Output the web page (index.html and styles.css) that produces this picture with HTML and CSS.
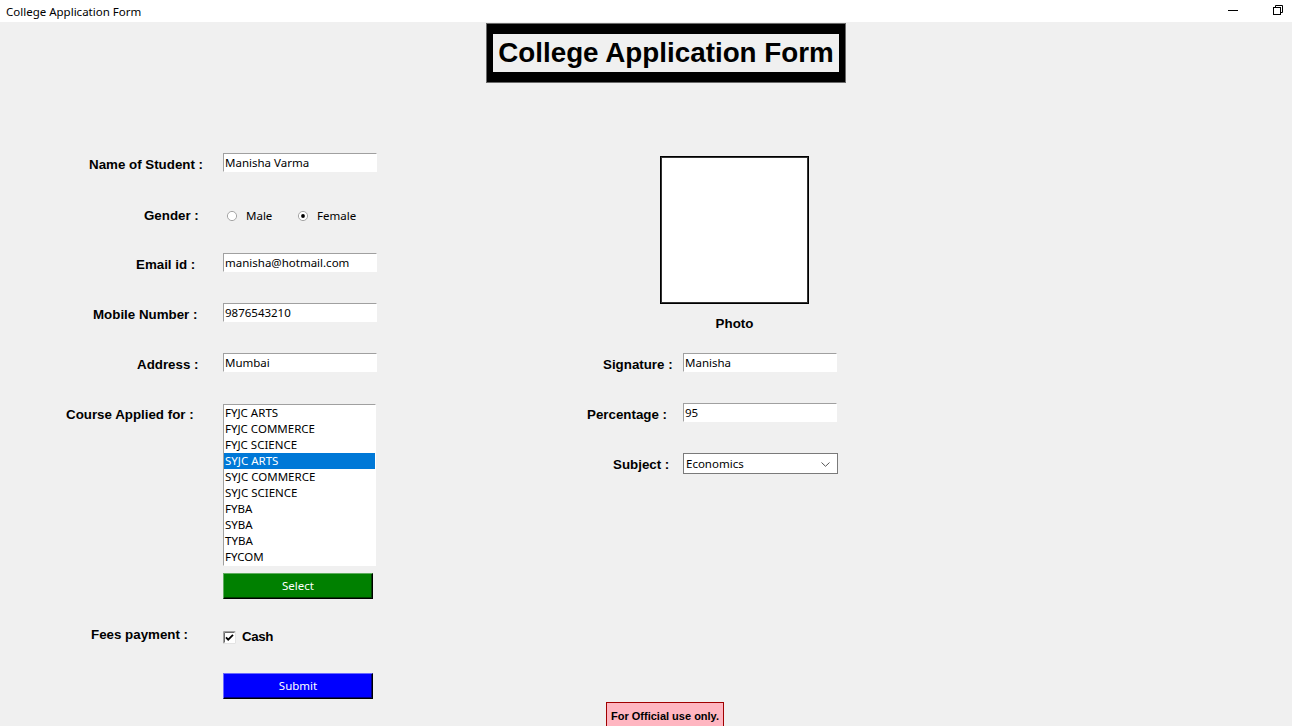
FILE: index.html
```html
<!DOCTYPE html>
<html lang="en">
<head>
<meta charset="utf-8">
<title>College Application Form</title>
<link rel="stylesheet" href="styles.css">
</head>
<body>
<div class="titlebar">
  <span class="title">College Application Form</span>
  <div class="winctl">
    <svg class="wbtn" width="10" height="10" viewBox="0 0 10 10"><line x1="0" y1="5.5" x2="10" y2="5.5" stroke="#000" stroke-width="1"/></svg>
    <svg class="wbtn" width="10" height="10" viewBox="0 0 10 10"><rect x="0.5" y="2.5" width="7" height="7" fill="none" stroke="#000"/><path d="M2.5 2.5V0.5H9.5V7.5H7.5" fill="none" stroke="#000"/></svg>
  </div>
</div>

<div class="heading"><div class="heading-inner">College Application Form</div></div>

<div class="form">
  <div class="col-left">
    <div class="row">
      <div class="lbl l-name">Name of Student :</div>
      <div class="entry">Manisha Varma</div>
    </div>
    <div class="row">
      <div class="lbl l-gender">Gender :</div>
      <div class="radios">
        <div class="radio-opt">
          <svg width="12" height="12" viewBox="0 0 12 12"><circle cx="6" cy="6" r="4.6" fill="#fff" stroke="#a6a6a6" stroke-width="1"/></svg>
          <span>Male</span>
        </div>
        <div class="radio-opt">
          <svg width="12" height="12" viewBox="0 0 12 12"><circle cx="6" cy="6" r="4.6" fill="#fff" stroke="#a6a6a6" stroke-width="1"/><circle cx="6" cy="6" r="1.9" fill="#000"/></svg>
          <span>Female</span>
        </div>
      </div>
    </div>
    <div class="row">
      <div class="lbl l-email">Email id :</div>
      <div class="entry">manisha@hotmail.com</div>
    </div>
    <div class="row">
      <div class="lbl l-mobile">Mobile Number :</div>
      <div class="entry">9876543210</div>
    </div>
    <div class="row">
      <div class="lbl l-address">Address :</div>
      <div class="entry">Mumbai</div>
    </div>
    <div class="row row-course">
      <div class="lbl l-course">Course Applied for :</div>
      <div class="course">
        <div class="listbox">
          <div class="item">FYJC ARTS</div>
          <div class="item">FYJC COMMERCE</div>
          <div class="item">FYJC SCIENCE</div>
          <div class="item selected">SYJC ARTS</div>
          <div class="item">SYJC COMMERCE</div>
          <div class="item">SYJC SCIENCE</div>
          <div class="item">FYBA</div>
          <div class="item">SYBA</div>
          <div class="item">TYBA</div>
          <div class="item">FYCOM</div>
        </div>
        <div class="btn btn-select">Select</div>
      </div>
    </div>
    <div class="row row-fees">
      <div class="lbl l-fees">Fees payment :</div>
      <div class="check">
        <svg width="13" height="13" viewBox="0 0 13 13">
          <rect x="0" y="0" width="13" height="13" fill="#fff"/>
          <path d="M0.5 12.5V0.5H12.5" fill="none" stroke="#a0a0a0"/>
          <path d="M1.5 11.5V1.5H11.5" fill="none" stroke="#696969"/>
          <path d="M0.5 12.5H12.5V0.5" fill="none" stroke="#e3e3e3"/>
          <path d="M3 6.3L5.2 8.6L10 3.8" fill="none" stroke="#000" stroke-width="1.8"/>
        </svg>
        <span class="cash">Cash</span>
      </div>
    </div>
    <div class="row row-submit">
      <div class="lbl"></div>
      <div class="btn btn-submit">Submit</div>
    </div>
  </div>

  <div class="col-right">
    <div class="photo-block">
      <div class="photo"></div>
      <div class="photo-cap">Photo</div>
    </div>
    <div class="row">
      <div class="lbl lbl-r l-sign">Signature :</div>
      <div class="entry">Manisha</div>
    </div>
    <div class="row">
      <div class="lbl lbl-r l-perc">Percentage :</div>
      <div class="entry">95</div>
    </div>
    <div class="row">
      <div class="lbl lbl-r l-subj">Subject :</div>
      <div class="combo">
        <span>Economics</span>
        <svg width="9" height="5" viewBox="0 0 9 5"><path d="M0.5 0.5L4.5 4.3L8.5 0.5" fill="none" stroke="#555" stroke-width="1"/></svg>
      </div>
    </div>
  </div>
</div>

<div class="official">For Official use only.</div>
</body>
</html>
```

FILE: styles.css
```css
* { box-sizing: border-box; }

body {
  margin: 0;
  width: 1292px;
  height: 726px;
  overflow: hidden;
  background: #f0f0f0;
  font-family: "Liberation Sans", Arial, sans-serif;
  color: #000;
}

.titlebar {
  height: 22px;
  background: #fff;
  display: flex;
  align-items: flex-start;
  padding-left: 6px;
  font: 11.5px/23px "Noto Sans", sans-serif;
}

.winctl {
  margin-left: auto;
  margin-right: 9px;
  padding-top: 5px;
  display: flex;
  gap: 35px;
}

.wbtn { display: block; }

.heading {
  margin: 1px 0 0 486px;
  width: 360px;
  height: 60px;
  background: #000;
  border: 1px solid #6a6a6a;
  padding: 10px 6px;
}

.heading-inner {
  height: 38px;
  background: #f0f0f0;
  font-weight: bold;
  font-size: 27.8px;
  line-height: 38px;
  text-align: center;
  white-space: nowrap;
}

.form {
  display: flex;
  margin-top: 70px;
}

.col-left { width: 560px; }
.col-right { width: 400px; }

.row {
  display: flex;
  align-items: flex-start;
  height: 50px;
}

.lbl {
  width: 223px;
  flex: none;
  font-weight: bold;
  font-size: 13.33px;
  line-height: 19px;
  padding-top: 1.5px;
  white-space: nowrap;
}

.l-name { padding-left: 89px; }
.l-gender { padding-left: 144px; padding-top: 2.5px; }
.l-email { padding-left: 136px; }
.l-mobile { padding-left: 93px; }
.l-address { padding-left: 137px; }
.l-course { padding-left: 66px; padding-top: 1.5px; }
.l-fees { padding-left: 91px; padding-top: 0; }

.lbl-r { width: 123px; }
.l-sign { padding-left: 43px; }
.l-perc { padding-left: 27px; }
.l-subj { padding-left: 53px; }

.entry {
  width: 154px;
  height: 19px;
  background: #fff;
  border: 1px solid;
  border-color: #a0a0a0 #fff #fff #a0a0a0;
  padding-left: 1px;
  font: 11.5px/17px "Noto Sans", sans-serif;
  white-space: nowrap;
  overflow: hidden;
}

.radios {
  display: flex;
  margin-top: 5px;
  padding-left: 3px;
  font: 11.5px/15px "Noto Sans", sans-serif;
}

.radio-opt {
  display: flex;
  align-items: center;
  height: 15px;
  gap: 8px;
  width: 71px;
}

.radio-opt svg { display: block; flex: none; }

.row-course { height: 222px; }

.course {
  display: flex;
  flex-direction: column;
  gap: 7px;
  padding-top: 1px;
}

.listbox {
  width: 153px;
  height: 162px;
  background: #fff;
  border: 1px solid;
  border-color: #a0a0a0 #fff #fff #a0a0a0;
  font: 11.5px "Noto Sans", sans-serif;
  overflow: hidden;
}

.item {
  height: 16px;
  line-height: 16px;
  padding-left: 1px;
  white-space: nowrap;
}

.item.selected {
  background: #0078d7;
  color: #fff;
}

.btn {
  width: 150px;
  height: 26px;
  color: #fff;
  text-align: center;
  font: 11.5px/24px "Noto Sans", sans-serif;
  border: 1px solid #000;
}

.btn-select {
  background: #008000;
  border-color: #5fae5f #000 #000 #5fae5f;
  box-shadow: inset -1px -1px 0 #004000;
}

.btn-submit {
  background: #0000ff;
  border-color: #6b6bff #000 #000 #6b6bff;
  box-shadow: inset -1px -1px 0 #000080;
}

.row-fees { height: 48px; }

.check {
  display: flex;
  align-items: flex-start;
}

.check svg {
  display: block;
  margin-top: 6px;
  flex: none;
}

.cash {
  margin-left: 6px;
  padding-top: 1.5px;
  font-weight: bold;
  font-size: 13.33px;
  line-height: 19px;
  letter-spacing: -0.4px;
}

.row-submit { height: 26px; }

.photo-block {
  height: 200px;
  padding-top: 3px;
  padding-left: 100px;
}

.photo {
  width: 149px;
  height: 148px;
  background: #fff;
  border: 1px solid #000;
  box-shadow: inset 0 0 0 1px #333;
}

.photo-cap {
  width: 149px;
  margin-top: 10px;
  text-align: center;
  font-weight: bold;
  font-size: 13.33px;
  line-height: 19px;
}

.combo {
  width: 155px;
  height: 21px;
  background: #fff;
  border: 1px solid #7a7a7a;
  padding-left: 2px;
  padding-right: 7px;
  display: flex;
  align-items: flex-start;
  justify-content: space-between;
  font: 11.5px/19px "Noto Sans", sans-serif;
}

.combo svg {
  display: block;
  margin-top: 7.5px;
}

.official {
  width: fit-content;
  margin: 3px 0 0 606px;
  padding: 7px 4px 8px;
  background: #ffb6c1;
  border: 1px solid #a00000;
  font-weight: bold;
  font-size: 11px;
  line-height: 13px;
  white-space: nowrap;
}
```
